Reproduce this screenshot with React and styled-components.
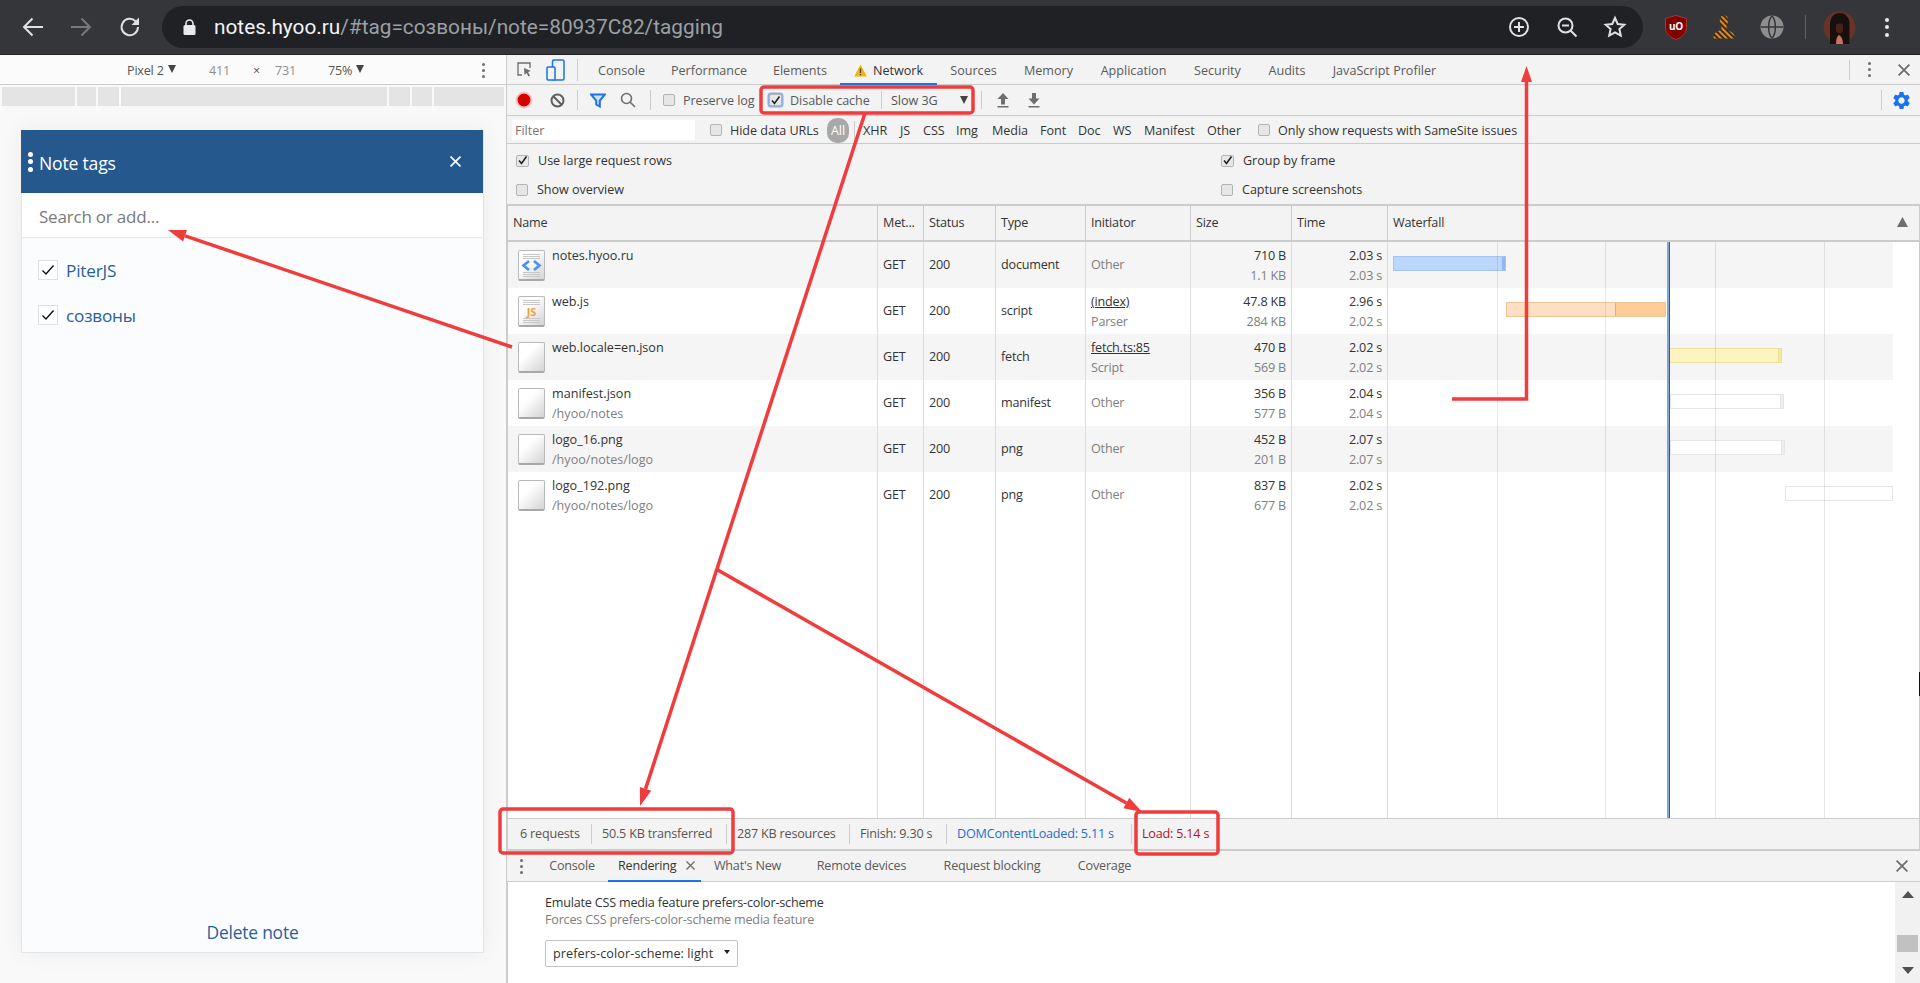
import React from "react";
import styled, {createGlobalStyle} from "styled-components";
import {MdSettings} from "react-icons/md";

const GlobalStyle = createGlobalStyle`
  html, body {
    margin: 0;
    padding: 0;
    background: #f3f3f3;
    overflow: hidden;
  }
  * {
    box-sizing: border-box;
  }
`;

const Page = styled.div`
  position: relative;
  display: flex;
  flex-direction: column;
  width: 1920px;
  height: 983px;
  overflow: hidden;
  font-family: "Open Sans", sans-serif;
  font-size: 12.6px;
  letter-spacing: -0.2px;
  color: #333;
`;

/* browser chrome */
const ChromeBar = styled.div`
  display: flex;
  align-items: center;
  flex: 0 0 55px;
  padding-left: 9px;
  background: #35363a;
  border-bottom: 1px solid #232326;
`;
const ChromeSlot = styled.div`
  display: flex;
  align-items: center;
  justify-content: center;
  flex: 0 0 ${p => p.$w || 48}px;
  height: 42px;
`;
const AddressBar = styled.div`
  display: flex;
  align-items: center;
  flex: 0 0 1481px;
  height: 42px;
  margin: 0 9px 0 8px;
  padding: 0 4px 0 21px;
  border-radius: 21px;
  background: #202124;
`;
const Url = styled.div`
  flex: 1;
  margin-left: 18px;
  font-family: Roboto, sans-serif;
  font-size: 20.8px;
  letter-spacing: 0;
  color: #9aa0a6;
  & b {
    font-weight: 400;
    color: #f1f3f4;
  }
`;
const ChromeDivider = styled.div`
  flex: 0 0 1px;
  height: 24px;
  margin: 0 9px 0 9px;
  background: #5f6368;
`;
const Dots = styled.div`
  display: flex;
  flex-direction: column;
  gap: ${p => p.$gap || 3}px;
  & i {
    display: block;
    width: ${p => p.$size || 3}px;
    height: ${p => p.$size || 3}px;
    border-radius: 50%;
    background: ${p => p.$color || "#6e6e6e"};
  }
`;

const Body = styled.div`
  display: flex;
  flex: 1;
  min-height: 0;
`;

/* left side: device emulation */
const DevicePane = styled.div`
  display: flex;
  flex-direction: column;
  flex: 0 0 507px;
  background: #f9f9f9;
  border-right: 1px solid #ccc;
`;
const DeviceBar = styled.div`
  display: flex;
  align-items: center;
  flex: 0 0 30px;
  padding: 2px 0 0 127px;
  background: #fbfbfb;
  border-bottom: 1px solid #ccc;
  color: #555;
`;
const DeviceItem = styled.div`
  display: flex;
  align-items: center;
  flex: 0 0 ${p => p.$w}px;
  gap: 4px;
  color: ${p => p.$color || "#555"};
`;
const Caret = styled.span`
  display: inline-block;
  width: 0;
  height: 0;
  margin-bottom: ${p => p.$flat ? 0 : 3}px;
  border-left: 4.5px solid transparent;
  border-right: 4.5px solid transparent;
  border-top: 8px solid #444;
`;
const Ruler = styled.div`
  display: flex;
  gap: 2px;
  height: 19px;
  margin: 2px 2px 0;
`;
const RulerSegment = styled.div`
  flex: ${p => p.$w ? `0 0 ${p.$w}px` : 1};
  background: #e4e4e4;
`;
const NotePanel = styled.div`
  display: flex;
  flex-direction: column;
  width: 463px;
  height: 823px;
  margin: 24px 0 0 21px;
  background: #fbfcfe;
  border: 1px solid #e3e4e6;
  border-top: 0;
  box-shadow: 0 0 22px rgba(0, 0, 0, 0.06);
  font-family: "Open Sans", sans-serif;
  letter-spacing: -0.2px;
`;
const NoteHeader = styled.div`
  display: flex;
  align-items: center;
  flex: 0 0 63px;
  margin-left: -1px;
  padding: 0 22px 0 7px;
  background: #25598d;
  color: #fff;
  font-size: 17.6px;
`;
const NoteTitle = styled.div`
  flex: 1;
  margin-left: 6px;
  padding-top: 2px;
`;
const SearchRow = styled.div`
  display: flex;
  align-items: center;
  flex: 0 0 45px;
  padding: 2px 0 0 17px;
  background: #fff;
  border-bottom: 1px solid #e6e8ea;
  font-size: 17px;
  color: #7a7a7a;
`;
const TagList = styled.div`
  display: flex;
  flex-direction: column;
  flex: 1;
  gap: 25px;
  padding: 22px 0 0 16px;
`;
const Tag = styled.div`
  display: flex;
  align-items: center;
  gap: 8px;
  height: 20px;
  font-size: 17.2px;
  color: #2a5f97;
`;
const TagBox = styled.div`
  display: flex;
  align-items: center;
  justify-content: center;
  width: 20px;
  height: 20px;
  background: #fff;
  border: 1px solid #e0e0e0;
`;
const DeleteNote = styled.div`
  padding-bottom: 8px;
  text-align: center;
  font-size: 17.4px;
  color: #2a5f97;
`;

/* right side: devtools */
const DevTools = styled.div`
  display: flex;
  flex-direction: column;
  flex: 1;
  min-width: 0;
  background: #f3f3f3;
`;
const ToolRow = styled.div`
  display: flex;
  align-items: center;
  flex: 0 0 ${p => p.$h}px;
  padding-top: ${p => p.$pt || 0}px;
  border-bottom: 1px solid #ccc;
  letter-spacing: -0.05px;
`;
const ToolButton = styled.div`
  display: flex;
  align-items: center;
  justify-content: center;
  flex: 0 0 ${p => p.$w}px;
  height: 100%;
  margin-left: ${p => p.$ml || 0}px;
`;
const Separator = styled.div`
  flex: 0 0 1px;
  height: ${p => p.$h || 20}px;
  margin-left: ${p => p.$auto ? "auto" : `${p.$ml || 0}px`};
  background: ${p => p.$clear ? "transparent" : "#ccc"};
`;
const PanelTab = styled.div`
  display: flex;
  align-items: center;
  justify-content: center;
  gap: 6px;
  flex: 0 0 ${p => p.$w}px;
  height: 100%;
  padding-top: 3px;
  letter-spacing: 0;
  color: ${p => p.$active ? "#333" : "#5a5a5a"};
  border-bottom: 2px solid ${p => p.$active ? "#1a73e8" : "transparent"};
  margin-bottom: ${p => p.$active ? "-1px" : "0"};
`;
const CheckLabel = styled.label`
  display: flex;
  align-items: center;
  flex: ${p => p.$w ? `0 0 ${p.$w}px` : "0 0 auto"};
  gap: ${p => p.$gap || 8}px;
  margin-left: ${p => p.$ml || 0}px;
  color: ${p => p.$dim ? "#5a5a5a" : "#333"};
`;
const CheckBox = styled.span`
  display: flex;
  align-items: center;
  justify-content: center;
  flex: 0 0 12px;
  height: 12px;
  background: ${p => p.$checked ? "#e8e8e8" : "#e6e6e6"};
  border: 1px solid #b4b4b4;
  border-radius: 2px;
  box-shadow: ${p => p.$focus ? "0 0 0 1.5px #8ab0e6" : "none"};
`;
const ThrottleSelect = styled.div`
  display: flex;
  align-items: center;
  justify-content: space-between;
  flex: 0 0 77px;
  margin-left: 9px;
  color: #555;
`;
const FilterInput = styled.div`
  display: flex;
  align-items: center;
  flex: 0 0 183px;
  height: 20px;
  margin-left: 5px;
  padding-left: 3px;
  background: #fff;
  color: #757575;
`;
const AllPill = styled.div`
  display: flex;
  align-items: center;
  justify-content: center;
  flex: 0 0 22px;
  height: 25px;
  margin-top: 1px;
  border-radius: 10px;
  background: #a8a8a8;
  color: #fff;
`;
const FilterType = styled.div`
  flex: 0 0 ${p => p.$w}px;
  margin-left: ${p => p.$ml || 0}px;
`;
const OptionsGrid = styled.div`
  display: grid;
  grid-template-columns: 705px 1fr;
  grid-auto-rows: 29px;
  flex: 0 0 60px;
  padding: 2px 0 0 9px;
  border-bottom: 2px solid #ccc;
  letter-spacing: -0.05px;
  color: #444;
`;

/* request table */
const columns = "370px 46px 72px 90px 105px 101px 96px 1fr";
const Table = styled.div`
  position: relative;
  display: flex;
  flex-direction: column;
  flex: 0 0 612px;
  background: #fff;
  border-left: 1px solid #ccc;
  border-right: 1px solid #ccc;
`;
const TableHead = styled.div`
  display: grid;
  grid-template-columns: ${columns};
  flex: 0 0 36px;
  background: #f3f3f3;
  border-bottom: 2px solid #ccc;
`;
const HeadCell = styled.div`
  display: flex;
  align-items: center;
  justify-content: space-between;
  padding: 0 5px 2px;
  border-right: 1px solid #ccc;
  &:last-child {
    border-right: 0;
  }
`;
const TableRow = styled.div`
  display: grid;
  grid-template-columns: ${columns};
  flex: ${p => p.$filler ? 1 : "0 0 46px"};
`;
const Cell = styled.div`
  display: flex;
  flex-direction: column;
  justify-content: ${p => p.$top ? "flex-start" : "center"};
  align-items: ${p => p.$right ? "flex-end" : "flex-start"};
  padding: ${p => p.$top ? "4px" : "0"} 5px 0;
  line-height: 20px;
  background: ${p => p.$alt ? "#f5f5f5" : "transparent"};
  border-right: 1px solid #dedede;
`;
const NameCell = styled.div`
  display: flex;
  gap: 7px;
  padding: 4px 0 0 10px;
  line-height: 20px;
  letter-spacing: 0;
  background: ${p => p.$alt ? "#f5f5f5" : "transparent"};
  border-right: 1px solid #dedede;
`;
const Sub = styled.span`
  color: #808080;
`;
const Linked = styled.span`
  text-decoration: underline;
`;
const FileIcon = styled.div`
  display: flex;
  flex-direction: column;
  align-items: center;
  justify-content: center;
  flex: 0 0 27px;
  height: 31px;
  margin-top: 4px;
  background: linear-gradient(135deg, #fff 35%, #d4d4d4);
  border: 1px solid #b9b9b9;
  border-bottom: 2px solid #a8a8a8;
  border-radius: 2px;
  font-family: "Open Sans", sans-serif;
  font-size: 11px;
  font-weight: 700;
  line-height: 11px;
  color: #f5a13c;
`;
const FileLines = styled.div`
  width: 17px;
  height: 5px;
  margin: 1px 0;
  background: repeating-linear-gradient(#c8c8c8 0 1px, transparent 1px 2px);
`;
const WaterfallTrack = styled.div`
  position: relative;
  width: 505px;
  height: 100%;
  background: ${p => p.$alt ? "#f5f5f5" : "transparent"};
`;
const Bar = styled.div`
  position: absolute;
  top: 14px;
  left: ${p => p.$left}px;
  width: ${p => p.$w}px;
  height: 15px;
  background: ${p => p.$bg};
  border: 1px solid ${p => p.$line};
`;
const BarTail = styled.div`
  position: absolute;
  top: 0;
  right: 0;
  bottom: 0;
  width: ${p => p.$w}px;
  background: ${p => p.$bg};
  border-left: 1px solid ${p => p.$line};
`;
const GridLine = styled.div`
  position: absolute;
  top: 36px;
  bottom: 0;
  left: ${p => p.$x}px;
  width: ${p => p.$w || 1}px;
  background: ${p => p.$color};
`;
const EdgeMark = styled.div`
  position: absolute;
  top: 466px;
  left: 1411px;
  width: 1px;
  height: 24px;
  background: #111;
`;

/* status bar */
const StatusBar = styled.div`
  display: flex;
  align-items: center;
  flex: 0 0 33px;
  padding-left: 1px;
  border-left: 1px solid #ccc;
  border-right: 1px solid #ccc;
  border-top: 1px solid #ccc;
  border-bottom: 2px solid #ccc;
`;
const StatusItem = styled.div`
  flex: 0 0 ${p => p.$w ? `${p.$w}px` : "auto"};
  height: 20px;
  padding-left: ${p => p.$pl || 10}px;
  line-height: 20px;
  border-right: ${p => p.$last ? "0" : "1px solid #ccc"};
  color: ${p => p.$color || "#555"};
`;

/* drawer */
const DrawerBar = styled.div`
  display: flex;
  align-items: center;
  flex: 0 0 31px;
  border-bottom: 1px solid #ccc;
  color: #5a5a5a;
`;
const DrawerTab = styled.div`
  position: relative;
  display: flex;
  align-items: center;
  justify-content: ${p => p.$active ? "flex-start" : "center"};
  flex: 0 0 ${p => p.$w}px;
  height: 100%;
  padding-left: ${p => p.$active ? "10px" : "0"};
  color: ${p => p.$active ? "#333" : "#5a5a5a"};
  border-bottom: 2px solid ${p => p.$active ? "#1a73e8" : "transparent"};
  margin-bottom: ${p => p.$active ? "-1px" : "0"};
`;
const DrawerClose = styled.div`
  position: absolute;
  top: 5px;
  right: 6px;
`;
const DrawerBody = styled.div`
  display: flex;
  flex: 1;
  min-height: 0;
  background: #fff;
  border-left: 1px solid #ccc;
`;
const RenderingOption = styled.div`
  flex: 1;
  padding: 12px 0 0 37px;
  line-height: 17px;
`;
const SelectBox = styled.div`
  display: flex;
  align-items: center;
  justify-content: space-between;
  width: 193px;
  height: 27px;
  margin-top: 12px;
  padding: 0 7px;
  letter-spacing: 0.1px;
  background: #fff;
  border: 1px solid #c4c4c4;
  border-radius: 2px;
`;
const SmallCaret = styled.span`
  width: 0;
  height: 0;
  margin-bottom: 3px;
  border-left: 3px solid transparent;
  border-right: 3px solid transparent;
  border-top: 4px solid #222;
`;
const Scrollbar = styled.div`
  display: flex;
  flex-direction: column;
  align-items: center;
  flex: 0 0 25px;
  padding-top: 9px;
  background: #f1f1f1;
`;
const ScrollThumb = styled.div`
  flex: 0 0 17px;
  width: 21px;
  margin: 37px 0 15px;
  background: #c1c1c1;
`;

/* red notes drawn over the page */
const Annotations = styled.svg`
  position: absolute;
  top: 0;
  left: 0;
  pointer-events: none;
`;
const SortArrow = styled.svg`
  margin-right: 6px;
`;
const ScrollArrowIcon = styled.svg`
  flex: 0 0 7px;
`;

const ChromeIcon = ({children, w = 24, h = 24, sw = 2, stroke = "#dfe1e5"}) => (
    <svg width={w} height={h} viewBox={`0 0 ${w} ${h}`} fill="none" stroke={stroke} strokeWidth={sw}>
        {children}
    </svg>
);

const BrowserControls = () => (
    <>
        <ChromeSlot>
            <ChromeIcon><path d="M22 12H3M11.5 3.5L3 12l8.5 8.5"/></ChromeIcon>
        </ChromeSlot>
        <ChromeSlot>
            <ChromeIcon stroke="#76787c"><path d="M2 12h19M12.5 3.5L21 12l-8.5 8.5"/></ChromeIcon>
        </ChromeSlot>
        <ChromeSlot $w={49}>
            <ChromeIcon>
                <path d="M20 12a8.2 8.2 0 1 1-2.4-5.8L20 8.5"/>
                <path d="M21 2.5V10h-7.5z" fill="#dfe1e5" stroke="none"/>
            </ChromeIcon>
        </ChromeSlot>
    </>
);

const AddressIcons = () => (
    <>
        <ChromeSlot>
            <ChromeIcon><circle cx="12" cy="12" r="9"/><path d="M12 7v10M7 12h10"/></ChromeIcon>
        </ChromeSlot>
        <ChromeSlot>
            <ChromeIcon>
                <circle cx="10.5" cy="10.5" r="7"/>
                <path d="M15.5 15.5l6 6M7 10.5h7"/>
            </ChromeIcon>
        </ChromeSlot>
        <ChromeSlot>
            <ChromeIcon><path d="M12 3l2.7 6 6.6.7-4.9 4.4 1.4 6.5L12 17.3l-5.8 3.3 1.4-6.5-4.9-4.4 6.6-.7z"/></ChromeIcon>
        </ChromeSlot>
    </>
);

const Extensions = () => (
    <>
        <ChromeSlot>
            <svg width="22" height="25" viewBox="0 0 22 25">
                <path d="M11 0.5L21.5 3.5V13c0 5.5-5 9.5-10.5 11.5C5.500 22.500.5 18.500.5 13V3.500z" fill="#800000" stroke="#a33"/>
                <text x="11" y="15" textAnchor="middle" fontFamily="Open Sans" fontSize="10" fontWeight="700" fill="#fff">uO</text>
            </svg>
        </ChromeSlot>
        <ChromeSlot>
            <svg width="22" height="24" viewBox="0 0 22 24">
                <defs>
                    <pattern id="hatch" width="4" height="4" patternUnits="userSpaceOnUse" patternTransform="rotate(-45)">
                        <rect width="4" height="4" fill="#3a2a18"/>
                        <rect width="2" height="4" fill="#e08a1e"/>
                    </pattern>
                </defs>
                <path d="M11 .5c3.500 0 4.500 2.500 4 6-.4 2.500-1.500 4-1.500 7 0 2 6 3 7.500 6 .3 1 .5 2.500.5 4H.5c0-1.500.2-3 .5-4 1.500-3 7.500-4 7.500-6 0-3-1.100-4.500-1.500-7-.5-3.500.5-6 4-6z" fill="url(#hatch)"/>
            </svg>
        </ChromeSlot>
        <ChromeSlot>
            <svg width="24" height="24" viewBox="0 0 24 24">
                <circle cx="12" cy="12" r="11.500" fill="#8e8e8e"/>
                <path d="M12 1C7.500 5 7.500 19 12 23M12 1c4.500 4 4.500 18 0 22M1 12h22" fill="none" stroke="#35363a" strokeWidth="1.500"/>
            </svg>
        </ChromeSlot>
        <ChromeDivider/>
        <ChromeSlot $w={48}>
            <svg width="33" height="33" viewBox="0 0 33 33">
                <circle cx="16.500" cy="16.500" r="16" fill="#6b3228"/>
                <path d="M7 33V12C8 4 13 2 17 2s9 3 9.500 10v21z" fill="#17100f"/>
                <path d="M13 14c1-2 6-2 7 0v6c-1 3-6 3-7 0z" fill="#4a2019"/>
                <path d="M13 33c0-5 1-8 3-9 2 1 4 4 4 9z" fill="#c9705f"/>
            </svg>
        </ChromeSlot>
        <ChromeSlot $w={48}>
            <Dots $size={4} $gap={3.500} $color="#e8eaed"><i/><i/><i/></Dots>
        </ChromeSlot>
    </>
);

const TinyCheck = () => (
    <svg width="11" height="11" viewBox="0 0 11 11" fill="none" stroke="#222" strokeWidth="1.600">
        <path d="M2 5.500L4.500 8.500 9.500 1.500"/>
    </svg>
);

const CloseGlyph = ({size = 11, color = "#6e6e6e", sw = 1.500}) => (
    <svg width={size} height={size} viewBox="0 0 10 10" fill="none" stroke={color} strokeWidth={sw}>
        <path d="M.5.5l9 9M9.500.5l-9 9"/>
    </svg>
);

const Check = ({label, checked, focus, ...rest}) => (
    <CheckLabel {...rest}>
        <CheckBox $checked={checked} $focus={focus}>{checked && <TinyCheck/>}</CheckBox>
        <span>{label}</span>
    </CheckLabel>
);

const PanelTabs = () => (
    <ToolRow $h={30}>
        <ToolButton $w={34}>
            <svg width="17" height="17" viewBox="0 0 17 17" fill="none" stroke="#6e6e6e" strokeWidth="1.300">
                <path d="M6 14H2V2h12v5"/>
                <path d="M8 7l7 3-3 1 2 3.500-1.500 1-2-3.500-2 2z" fill="#6e6e6e" stroke="none"/>
            </svg>
        </ToolButton>
        <ToolButton $w={28}>
            <svg width="19" height="22" viewBox="0 0 19 22" fill="none" stroke="#1a73e8" strokeWidth="1.500">
                <rect x="6.500" y="1" width="11.500" height="20" rx="1.500"/>
                <rect x="1" y="8" width="8" height="13" rx="1" fill="#f3f3f3"/>
            </svg>
        </ToolButton>
        <Separator $ml={8} $h={22}/>
        <ToolButton $w={7}/>
        <PanelTab $w={73}>Console</PanelTab>
        <PanelTab $w={102}>Performance</PanelTab>
        <PanelTab $w={80}>Elements</PanelTab>
        <PanelTab $w={97} $active>
            <svg width="13" height="13" viewBox="0 0 13 13">
                <path d="M6.500.5L12.800 12.500H.2z" fill="#f5b400"/>
                <path d="M6.500 4.500v4.500M6.500 10v1.300" stroke="#444" strokeWidth="1.300"/>
            </svg>
            Network
        </PanelTab>
        <PanelTab $w={73}>Sources</PanelTab>
        <PanelTab $w={77}>Memory</PanelTab>
        <PanelTab $w={93}>Application</PanelTab>
        <PanelTab $w={75}>Security</PanelTab>
        <PanelTab $w={64}>Audits</PanelTab>
        <PanelTab $w={131}>JavaScript Profiler</PanelTab>
        <Separator $auto $h={20}/>
        <ToolButton $w={38}><Dots><i/><i/><i/></Dots></ToolButton>
        <ToolButton $w={32}><CloseGlyph size={12}/></ToolButton>
    </ToolRow>
);

const NetworkToolbar = () => (
    <ToolRow $h={31}>
        <ToolButton $w={34}>
            <svg width="18" height="18" viewBox="0 0 18 18">
                <circle cx="9" cy="9" r="8.500" fill="#f4c6c6"/>
                <circle cx="9" cy="9" r="6.500" fill="#d60000"/>
            </svg>
        </ToolButton>
        <ToolButton $w={32}>
            <svg width="15" height="15" viewBox="0 0 15 15" fill="none" stroke="#5f5f5f" strokeWidth="2">
                <circle cx="7.500" cy="7.500" r="6"/>
                <path d="M3.300 3.300l8.400 8.400"/>
            </svg>
        </ToolButton>
        <Separator $ml={4}/>
        <ToolButton $w={30} $ml={5}>
            <svg width="16" height="15" viewBox="0 0 16 15" fill="#cfe0fa" stroke="#1a73e8" strokeWidth="2">
                <path d="M1 1.500h14L9.800 7.500V13.500L6.200 11.500V7.500z"/>
            </svg>
        </ToolButton>
        <ToolButton $w={30}>
            <svg width="16" height="16" viewBox="0 0 16 16" fill="none" stroke="#6e6e6e" strokeWidth="1.600">
                <circle cx="6.500" cy="6.500" r="5"/>
                <path d="M10 10l5 5"/>
            </svg>
        </ToolButton>
        <Separator $ml={7}/>
        <Check label="Preserve log" $ml={12} $w={106} $dim/>
        <Check label="Disable cache" checked focus $w={112} $dim/>
        <Separator $h={18}/>
        <ThrottleSelect>
            Slow 3G
            <Caret $flat/>
        </ThrottleSelect>
        <Separator $ml={13} $h={18}/>
        <ToolButton $w={30} $ml={6}>
            <svg width="12" height="15" viewBox="0 0 12 15" fill="#6e6e6e">
                <path d="M6 0l5.500 6H8v5.500H4V6H.5zM.5 13h11v1.500H.5z"/>
            </svg>
        </ToolButton>
        <ToolButton $w={30} $ml={1}>
            <svg width="12" height="15" viewBox="0 0 12 15" fill="#6e6e6e">
                <path d="M6 11.500L.5 5.500H4V0h4v5.500h3.500zM.5 13h11v1.500H.5z"/>
            </svg>
        </ToolButton>
        <Separator $auto $h={20}/>
        <ToolButton $w={38}>
            <MdSettings size={21} color="#1a73e8"/>
        </ToolButton>
    </ToolRow>
);

const filterTypes = [
    ["XHR", 37], ["JS", 23], ["CSS", 33], ["Img", 36], ["Media", 48],
    ["Font", 38], ["Doc", 35], ["WS", 31], ["Manifest", 63], ["Other", 51],
];

const FilterBar = () => (
    <ToolRow $h={28} $pt={1}>
        <FilterInput>Filter</FilterInput>
        <Check label="Hide data URLs" $ml={15} $w={117} $gap={8}/>
        <AllPill>All</AllPill>
        <Separator $ml={5} $h={18}/>
        <FilterType $w={0} $ml={8}/>
        {filterTypes.map(([name, w]) => <FilterType key={name} $w={w}>{name}</FilterType>)}
        <Check label="Only show requests with SameSite issues"/>
    </ToolRow>
);

const requests = [
    {name: "notes.hyoo.ru", icon: "html", type: "document", init: <Sub>Other</Sub>, size: "710 B", size2: "1.1 KB", time: "2.03 s", time2: "2.03 s"},
    {name: "web.js", icon: "js", type: "script", init: <Linked>(index)</Linked>, init2: "Parser", size: "47.8 KB", size2: "284 KB", time: "2.96 s", time2: "2.02 s"},
    {name: "web.locale=en.json", type: "fetch", init: <Linked>fetch.ts:85</Linked>, init2: "Script", size: "470 B", size2: "569 B", time: "2.02 s", time2: "2.02 s"},
    {name: "manifest.json", path: "/hyoo/notes", type: "manifest", init: <Sub>Other</Sub>, size: "356 B", size2: "577 B", time: "2.04 s", time2: "2.04 s"},
    {name: "logo_16.png", path: "/hyoo/notes/logo", type: "png", init: <Sub>Other</Sub>, size: "452 B", size2: "201 B", time: "2.07 s", time2: "2.07 s"},
    {name: "logo_192.png", path: "/hyoo/notes/logo", type: "png", init: <Sub>Other</Sub>, size: "837 B", size2: "677 B", time: "2.02 s", time2: "2.02 s"},
];

const bars = [
    {left: 5, w: 113, bg: "#bcd7fc", line: "#a3c4f5", tail: 3, tailBg: "#8fb8f3", tailLine: "#8fb8f3"},
    {left: 118, w: 160, bg: "#ffdfc2", line: "#f0c49a", tail: 50, tailBg: "#ffcb96", tailLine: "#e3ad7c"},
    {left: 281, w: 113, bg: "#fdf4c0", line: "#ecdf9a", tail: 3, tailBg: "#f7e98f", tailLine: "#ecdf9a"},
    {left: 282, w: 114, bg: "#fff", line: "#e6e6e6", tail: 3, tailBg: "#eee", tailLine: "#e6e6e6"},
    {left: 282, w: 115, bg: "#fff", line: "#e6e6e6", tail: 3, tailBg: "#eee", tailLine: "#e6e6e6"},
    {left: 397, w: 108, bg: "#fff", line: "#e6e6e6"},
];

const FileBadge = ({kind}) => {
    if (kind === "html") return (
        <FileIcon>
            <FileLines/>
            <svg width="21" height="11" viewBox="0 0 21 11" fill="none" stroke="#4a90f0" strokeWidth="2.600">
                <path d="M8 1L2.500 5.500 8 10M13 1l5.500 4.500L13 10"/>
            </svg>
            <FileLines/>
        </FileIcon>
    );
    if (kind === "js") return (
        <FileIcon>
            <FileLines/>
            JS
            <FileLines/>
        </FileIcon>
    );
    return <FileIcon/>;
};

const RequestRow = ({req, bar, alt}) => (
    <TableRow>
        <NameCell $alt={alt}>
            <FileBadge kind={req.icon}/>
            <div>
                {req.name}
                {req.path && <><br/><Sub>{req.path}</Sub></>}
            </div>
        </NameCell>
        <Cell $alt={alt}>GET</Cell>
        <Cell $alt={alt}>200</Cell>
        <Cell $alt={alt}>{req.type}</Cell>
        <Cell $alt={alt} $top={!!req.init2}>
            {req.init}
            {req.init2 && <Sub>{req.init2}</Sub>}
        </Cell>
        <Cell $alt={alt} $top $right>{req.size}<Sub>{req.size2}</Sub></Cell>
        <Cell $alt={alt} $top $right>{req.time}<Sub>{req.time2}</Sub></Cell>
        <WaterfallTrack $alt={alt}>
            <Bar $left={bar.left} $w={bar.w} $bg={bar.bg} $line={bar.line}>
                {bar.tail && <BarTail $w={bar.tail} $bg={bar.tailBg} $line={bar.tailLine}/>}
            </Bar>
        </WaterfallTrack>
    </TableRow>
);

const RequestTable = () => (
    <Table>
        <TableHead>
            <HeadCell>Name</HeadCell>
            <HeadCell>Met...</HeadCell>
            <HeadCell>Status</HeadCell>
            <HeadCell>Type</HeadCell>
            <HeadCell>Initiator</HeadCell>
            <HeadCell>Size</HeadCell>
            <HeadCell>Time</HeadCell>
            <HeadCell>
                Waterfall
                <SortArrow width="11" height="10" viewBox="0 0 11 10" fill="#6e6e6e">
                    <path d="M5.500 0L11 10H0z"/>
                </SortArrow>
            </HeadCell>
        </TableHead>
        {requests.map((req, i) => <RequestRow key={req.name} req={req} bar={bars[i]} alt={i % 2 === 0}/>)}
        <TableRow $filler>
            <Cell/><Cell/><Cell/><Cell/><Cell/><Cell/><Cell/><div/>
        </TableRow>
        <GridLine $x={989} $color="rgba(0,0,0,0.09)"/>
        <GridLine $x={1097} $color="rgba(0,0,0,0.09)"/>
        <GridLine $x={1207} $color="rgba(0,0,0,0.09)"/>
        <GridLine $x={1316} $color="rgba(0,0,0,0.09)"/>
        <GridLine $x={1159} $w={2} $color="#7fa4d8"/>
        <GridLine $x={1161} $color="#a8303f"/>
        <EdgeMark/>
    </Table>
);

const StatusLine = () => (
    <StatusBar>
        <StatusItem $w={83} $pl={11}>6 requests</StatusItem>
        <StatusItem $w={135}>50.5 KB transferred</StatusItem>
        <StatusItem $w={123}>287 KB resources</StatusItem>
        <StatusItem $w={97}>Finish: 9.30 s</StatusItem>
        <StatusItem $w={185} $color="#1a6fd0">DOMContentLoaded: 5.11 s</StatusItem>
        <StatusItem $last $color="#b3131b">Load: 5.14 s</StatusItem>
    </StatusBar>
);

const Drawer = () => (
    <>
        <DrawerBar>
            <ToolButton $w={29}><Dots><i/><i/><i/></Dots></ToolButton>
            <DrawerTab $w={72}>Console</DrawerTab>
            <DrawerTab $w={93} $active>
                Rendering
                <DrawerClose><CloseGlyph size={9}/></DrawerClose>
            </DrawerTab>
            <DrawerTab $w={93}>What's New</DrawerTab>
            <DrawerTab $w={135}>Remote devices</DrawerTab>
            <DrawerTab $w={126}>Request blocking</DrawerTab>
            <DrawerTab $w={99}>Coverage</DrawerTab>
            <Separator $auto $clear/>
            <ToolButton $w={37}><CloseGlyph size={12}/></ToolButton>
        </DrawerBar>
        <DrawerBody>
            <RenderingOption>
                <div>Emulate CSS media feature prefers-color-scheme</div>
                <Sub>Forces CSS prefers-color-scheme media feature</Sub>
                <SelectBox>
                    prefers-color-scheme: light
                    <SmallCaret/>
                </SelectBox>
            </RenderingOption>
            <Scrollbar>
                <ScrollArrowIcon width="12" height="7" viewBox="0 0 12 7" fill="#505050">
                    <path d="M6 0l6 7H0z"/>
                </ScrollArrowIcon>
                <ScrollThumb/>
                <ScrollArrowIcon width="12" height="7" viewBox="0 0 12 7" fill="#505050">
                    <path d="M6 7L0 0h12z"/>
                </ScrollArrowIcon>
            </Scrollbar>
        </DrawerBody>
    </>
);

const NoteCard = () => (
    <NotePanel>
        <NoteHeader>
            <Dots $size={5} $gap={2.500} $color="#fff"><i/><i/><i/></Dots>
            <NoteTitle>Note tags</NoteTitle>
            <CloseGlyph size={11} color="#fff"/>
        </NoteHeader>
        <SearchRow>Search or add...</SearchRow>
        <TagList>
            {["PiterJS", "созвоны"].map(tag => (
                <Tag key={tag}>
                    <TagBox>
                        <svg width="14" height="12" viewBox="0 0 14 12" fill="none" stroke="#111" strokeWidth="1.400">
                            <path d="M1.500 6.500L5 10l7.500-8.500"/>
                        </svg>
                    </TagBox>
                    {tag}
                </Tag>
            ))}
        </TagList>
        <DeleteNote>Delete note</DeleteNote>
    </NotePanel>
);

const Arrow = ({x1, y1, x2, y2, len = 18, half = 6}) => {
    const a = Math.atan2(y2 - y1, x2 - x1);
    const bx = x2 - Math.cos(a) * len;
    const by = y2 - Math.sin(a) * len;
    const nx = -Math.sin(a) * half;
    const ny = Math.cos(a) * half;
    return (
        <>
            <line x1={x1} y1={y1} x2={bx} y2={by}/>
            <polygon points={`${x2},${y2} ${bx + nx},${by + ny} ${bx - nx},${by - ny}`} fill="#f03c3c" stroke="none"/>
        </>
    );
};

const RedNotes = () => (
    <Annotations width="1920" height="983" viewBox="0 0 1920 983" fill="none" stroke="#f03c3c" strokeWidth="3.500">
        <rect x="761" y="87" width="212" height="26" rx="3"/>
        <rect x="500" y="809" width="233" height="44" rx="3"/>
        <rect x="1136" y="812" width="82" height="42" rx="3"/>
        <Arrow x1={512} y1={347} x2={168} y2={230}/>
        <Arrow x1={865} y1={113} x2={640} y2={806}/>
        <Arrow x1={716} y1={569} x2={1142} y2={812}/>
        <polyline points="1452,399 1526.500,399 1526.500,80"/>
        <polygon points="1526.500,66 1532,82 1521,82" fill="#f03c3c" stroke="none"/>
    </Annotations>
);

export default function App() {
    return (
        <Page>
            <GlobalStyle/>
            <ChromeBar>
                <BrowserControls/>
                <AddressBar>
                    <svg width="13" height="16" viewBox="0 0 13 16">
                        <path d="M3 7V4.500a3.500 3.500 0 0 1 7 0V7" fill="none" stroke="#e8eaed" strokeWidth="1.600"/>
                        <rect x=".5" y="6" width="12" height="10" rx="1.500" fill="#e8eaed"/>
                    </svg>
                    <Url><b>notes.hyoo.ru</b>/#tag=созвоны/note=80937C82/tagging</Url>
                    <AddressIcons/>
                </AddressBar>
                <Extensions/>
            </ChromeBar>
            <Body>
                <DevicePane>
                    <DeviceBar>
                        <DeviceItem $w={82}>Pixel 2 <Caret/></DeviceItem>
                        <DeviceItem $w={44} $color="#8f8f8f">411</DeviceItem>
                        <DeviceItem $w={22}>×</DeviceItem>
                        <DeviceItem $w={53} $color="#8f8f8f">731</DeviceItem>
                        <DeviceItem $w={154}>75% <Caret/></DeviceItem>
                        <Dots><i/><i/><i/></Dots>
                    </DeviceBar>
                    <Ruler>
                        <RulerSegment $w={73}/>
                        <RulerSegment $w={19}/>
                        <RulerSegment $w={21}/>
                        <RulerSegment $w={266}/>
                        <RulerSegment $w={21}/>
                        <RulerSegment $w={20}/>
                        <RulerSegment/>
                    </Ruler>
                    <NoteCard/>
                </DevicePane>
                <DevTools>
                    <PanelTabs/>
                    <NetworkToolbar/>
                    <FilterBar/>
                    <OptionsGrid>
                        <Check label="Use large request rows" checked $gap={9}/>
                        <Check label="Group by frame" checked $gap={9}/>
                        <Check label="Show overview" $gap={9}/>
                        <Check label="Capture screenshots" $gap={9}/>
                    </OptionsGrid>
                    <RequestTable/>
                    <StatusLine/>
                    <Drawer/>
                </DevTools>
            </Body>
            <RedNotes/>
        </Page>
    );
}
